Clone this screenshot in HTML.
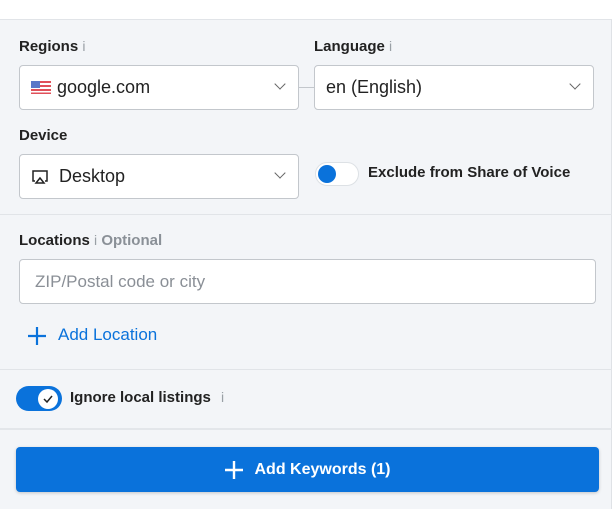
<!DOCTYPE html>
<html><head><style>
*{box-sizing:border-box;margin:0;padding:0}
body{width:616px;height:509px;overflow:hidden;background:#fff;font-family:"Liberation Sans",Arial,sans-serif;position:relative;color:#1f2328}
.panel{position:absolute;left:0;top:19px;width:612px;height:490px;background:#f3f5f8;border-top:1px solid #e1e4e8;border-right:1px solid #dfe2e6}
.a{position:absolute}
.lbl{font-size:15px;color:#222;font-weight:bold}
.i{color:#9aa0a6;font-size:14px;font-weight:normal}
.inp{position:absolute;background:#fff;border:1px solid #c3c7cc;border-radius:4px;height:45px;font-size:18px;color:#222;display:flex;align-items:center}
.chev{position:absolute;right:14px;top:14px;width:8px;height:8px;border-right:1.6px solid #666;border-bottom:1.6px solid #666;transform:rotate(45deg)}
.hr{position:absolute;left:0;width:612px;height:1px;background:#e1e4e8}
</style></head><body>
<div class="panel"></div>
<div class="a lbl" style="left:19px;top:38px">Regions <span class="i">i</span></div>
<div class="a lbl" style="left:314px;top:38px">Language <span class="i">i</span></div>
<div class="a" style="left:298px;top:87px;width:16px;height:1px;background:#c3c7cc"></div>
<div class="inp" style="left:19px;top:65px;width:280px">
 <svg style="margin-left:11px" width="20" height="13" viewBox="0 0 20 13"><rect width="20" height="13" fill="#fff"/><g fill="#e0505a"><rect y="0" width="20" height="2"/><rect y="4" width="20" height="2"/><rect y="8" width="20" height="2"/><rect y="11.5" width="20" height="1.5"/></g><rect width="9" height="7" fill="#5a78c8"/></svg>
 <span style="margin-left:6px">google.com</span><div class="chev"></div></div>
<div class="inp" style="left:314px;top:65px;width:280px"><span style="margin-left:11px">en (English)</span><div class="chev"></div></div>
<div class="a lbl" style="left:19px;top:127px">Device</div>
<div class="inp" style="left:19px;top:154px;width:280px">
 <svg style="margin-left:11px" width="18" height="16" viewBox="0 0 18 16" fill="none" stroke="#222" stroke-width="1.5"><path d="M4 12H2V2h14v10h-2"/><path d="M9 9l4 5H5z"/></svg>
 <span style="margin-left:10px">Desktop</span><div class="chev"></div></div>
<div class="a" style="left:315px;top:162px;width:44px;height:24px;border-radius:12px;background:#fff;border:1px solid #dde1e5"></div>
<div class="a" style="left:318px;top:165px;width:18px;height:18px;border-radius:50%;background:#0a72db"></div>
<div class="a" style="left:368px;top:164px;font-size:15px;color:#222;font-weight:bold">Exclude from Share of Voice</div>
<div class="hr" style="top:214px"></div>
<div class="a lbl" style="left:19px;top:232px">Locations <span class="i">i</span> <span style="color:#8a9097">Optional</span></div>
<div class="inp" style="left:19px;top:259px;width:577px"><span style="margin-left:15px;color:#8a8f96;font-size:17px">ZIP/Postal code or city</span></div>
<svg class="a" style="left:27px;top:326px" width="20" height="20" viewBox="0 0 20 20" stroke="#0a72db" stroke-width="2.2"><path d="M10 1v18M1 10h18"/></svg>
<div class="a" style="left:58px;top:325px;font-size:17px;color:#0a72db">Add Location</div>
<div class="hr" style="top:369px"></div>
<div class="a" style="left:16px;top:386px;width:46px;height:25px;border-radius:13px;background:#0a72db"></div>
<div class="a" style="left:38px;top:389px;width:20px;height:20px;border-radius:50%;background:#fff"></div>
<svg class="a" style="left:42px;top:393px" width="12" height="12" viewBox="0 0 12 12" fill="none" stroke="#222" stroke-width="1.5"><path d="M2 6l3 3 5-6"/></svg>
<div class="a" style="left:70px;top:389px;font-size:15px;color:#222;font-weight:bold">Ignore local listings <span class="i" style="margin-left:6px">i</span></div>
<div class="hr" style="top:428px;height:2px;background:#e3e6ea"></div>
<div class="a" style="left:16px;top:447px;width:583px;height:45px;border-radius:4px;background:#0a72db;box-shadow:0 1px 3px rgba(0,0,0,.2);color:#fff;font-size:16px;font-weight:bold;display:flex;align-items:center;justify-content:center">
 <svg width="20" height="20" viewBox="0 0 20 20" stroke="#fff" stroke-width="2.4" style="margin-right:10px"><path d="M10 1v18M1 10h18"/></svg>Add Keywords (1)</div>
</body></html>
